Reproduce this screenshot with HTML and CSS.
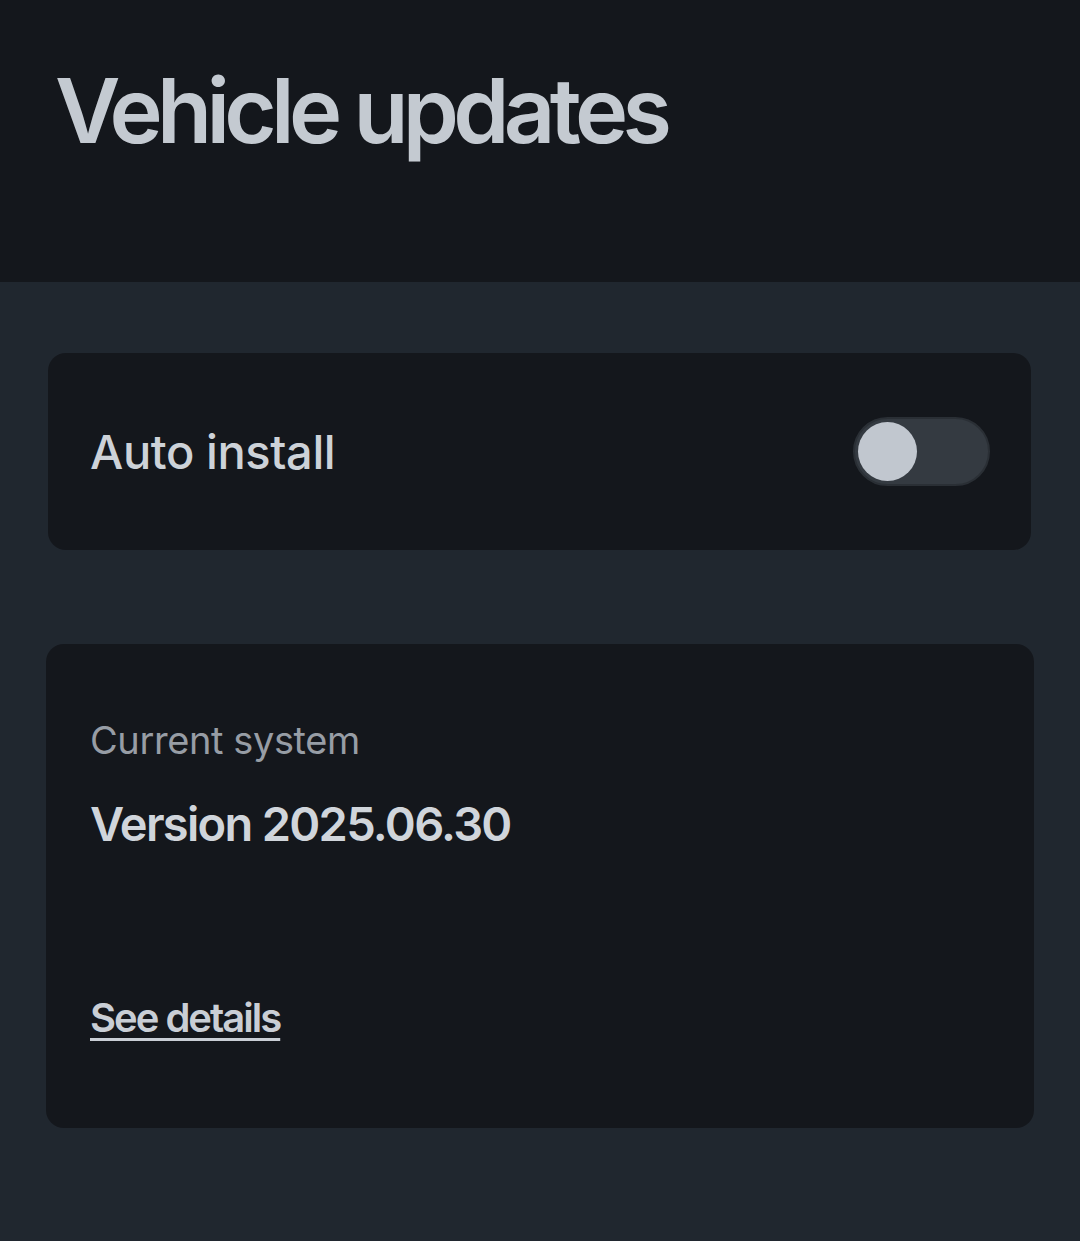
FILE: index.html
```html
<!DOCTYPE html>
<html lang="en">
<head>
<meta charset="utf-8">
<title>Vehicle updates</title>
<link rel="stylesheet" href="styles.css">
</head>
<body>
<header class="top">
  <h1 class="title">Vehicle updates</h1>
</header>
<main class="content">
  <section class="card row-card">
    <span class="row-label">Auto install</span>
    <div class="toggle" role="switch" aria-checked="false"><span class="knob"></span></div>
  </section>
  <section class="card info-card">
    <div class="caption">Current system</div>
    <div class="version">Version 2025.06.30</div>
    <a class="details" href="#">See details</a>
  </section>
</main>
</body>
</html>
```
FILE: styles.css
```css
* { box-sizing: border-box; }
html, body { margin: 0; padding: 0; }
body {
  width: 1080px;
  height: 1241px;
  background: #20272f;
  font-family: Inter, "Noto Sans", sans-serif;
  color: #c9ced5;
  overflow: hidden;
}
.top {
  height: 282px;
  background: #14171c;
  padding: 56px 0 0 55px;
}
.title {
  margin: 0;
  font-size: 90px;
  font-weight: 600;
  letter-spacing: -5.7px;
  line-height: 110px;
  color: #c4cad1;
}
.content {
  display: flex;
  flex-direction: column;
  padding: 71px 47px 0 47px;
  gap: 94px;
}
.card {
  background: #14171c;
  border-radius: 18px;
}
.row-card {
  height: 197px;
  margin: 0 2px 0 1px;
  display: flex;
  align-items: center;
  justify-content: space-between;
  padding: 0 41px 0 42px;
}
.row-label {
  font-size: 47px;
  font-weight: 500;
  letter-spacing: -0.4px;
  color: #cdd2d8;
}
.toggle {
  width: 137px;
  height: 69px;
  border-radius: 35px;
  background: #343a41;
  border: 2px solid #2a2f35;
  display: flex;
  align-items: center;
  padding-left: 3px;
}
.knob {
  width: 59px;
  height: 59px;
  border-radius: 50%;
  background: #c1c7cf;
}
.info-card {
  height: 484px;
  margin: 0 -1px 0 -1px;
  display: flex;
  flex-direction: column;
  padding: 70px 44px 0 44px;
}
.caption {
  font-size: 38px;
  font-weight: 400;
  letter-spacing: -0.4px;
  color: #979da5;
  line-height: 52px;
}
.version {
  margin-top: 30px;
  font-size: 47px;
  font-weight: 600;
  letter-spacing: -1.7px;
  color: #d0d5db;
  line-height: 56px;
}
.details {
  margin-top: 140px;
  align-self: flex-start;
  font-size: 40px;
  font-weight: 600;
  letter-spacing: -2px;
  color: #c9ced5;
  text-decoration: underline;
  text-decoration-thickness: 3px;
  text-underline-offset: 6px;
  line-height: 52px;
}
```
